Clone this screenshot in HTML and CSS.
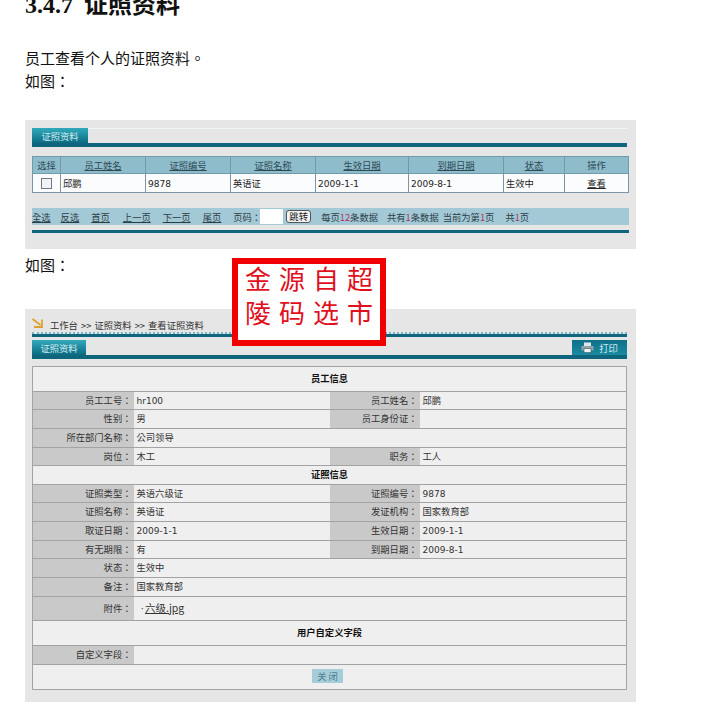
FILE: index.html
```html
<!DOCTYPE html>
<html lang="zh-CN">
<head>
  <meta charset="UTF-8">
  <title>证照资料</title>
  <link rel="stylesheet" href="styles.css">
</head>
<body>
  <h1>3.4.7 证照资料</h1>
  <p class="intro">员工查看个人的证照资料。</p>
  <p class="intro">如图：</p>

  <div class="panel panel-list">
    <div class="tabbar"><span class="tab">证照资料</span></div>
    <table class="list">
      <tr>
        <th class="c-check">选择</th>
        <th class="c-std"><u>员工姓名</u></th>
        <th class="c-std"><u>证照编号</u></th>
        <th class="c-std"><u>证照名称</u></th>
        <th class="c-date"><u>生效日期</u></th>
        <th class="c-date2"><u>到期日期</u></th>
        <th class="c-state"><u>状态</u></th>
        <th>操作</th>
      </tr>
      <tr>
        <td class="center"><span class="check"></span></td>
        <td>邱鹏</td>
        <td class="num">9878</td>
        <td>英语证</td>
        <td class="num">2009-1-1</td>
        <td class="num">2009-8-1</td>
        <td>生效中</td>
        <td class="center"><u>查看</u></td>
      </tr>
    </table>
    <div class="pager">
      <u class="gap-10">全选</u>
      <u class="gap-12">反选</u>
      <u class="gap-13">首页</u>
      <u class="gap-12">上一页</u>
      <u class="gap-12">下一页</u>
      <u class="gap-12">尾页</u>
      <span>页码：</span>
      <span class="page-input"></span>
      <span class="jump">跳转</span>
      <span class="gap-9">每页<b>12</b>条数据</span>
      <span class="gap-4">共有<b>1</b>条数据</span>
      <span class="gap-11">当前为第<b>1</b>页</span>
      <span>共<b>1</b>页</span>
    </div>
    <div class="rule"></div>
  </div>

  <p class="intro intro-second">如图：</p>

  <div class="stamp">
    <div class="stamp-row"><span>金</span><span>源</span><span>自</span><span>超</span></div>
    <div class="stamp-row"><span>陵</span><span>码</span><span>选</span><span>市</span></div>
  </div>

  <div class="panel panel-detail">
    <div class="crumbs">
      <svg class="crumb-icon" width="12" height="10" viewBox="0 0 12 10">
        <path d="M0.5 1 L8.5 7 M2 9 H10 V1.5" fill="none" stroke="#e0a030" stroke-width="1.8"/>
      </svg>
      <span>工作台 &gt;&gt; 证照资料 &gt;&gt; 查看证照资料</span>
    </div>
    <div class="tabbar tabbar-detail">
      <span class="tab">证照资料</span>
      <span class="print">
        <svg width="13" height="11" viewBox="0 0 13 11">
          <path d="M3 0.5 H10 V4 H3 Z" fill="#dfe6e8"/>
          <path d="M0.5 4 H12.5 V8.5 H0.5 Z" fill="#8fa3a8"/>
          <path d="M3 6.5 H10 V10.5 H3 Z" fill="#eef2f3" stroke="#44565c" stroke-width="0.6"/>
        </svg>
        打印
      </span>
    </div>
    <table class="detail">
      <colgroup>
        <col class="col-label">
        <col class="col-value">
        <col class="col-label2">
        <col>
      </colgroup>
      <tr class="h-head"><td colspan="4" class="section">员工信息</td></tr>
      <tr class="h-18"><td class="label">员工工号：</td><td class="num">hr100</td><td class="label">员工姓名：</td><td>邱鹏</td></tr>
      <tr class="h-19"><td class="label">性别：</td><td>男</td><td class="label">员工身份证：</td><td></td></tr>
      <tr class="h-19"><td class="label">所在部门名称：</td><td colspan="3">公司领导</td></tr>
      <tr class="h-18"><td class="label">岗位：</td><td>木工</td><td class="label">职务：</td><td>工人</td></tr>
      <tr class="h-19"><td colspan="4" class="section">证照信息</td></tr>
      <tr class="h-18"><td class="label">证照类型：</td><td>英语六级证</td><td class="label">证照编号：</td><td class="num">9878</td></tr>
      <tr class="h-19"><td class="label">证照名称：</td><td>英语证</td><td class="label">发证机构：</td><td>国家教育部</td></tr>
      <tr class="h-19"><td class="label">取证日期：</td><td class="num">2009-1-1</td><td class="label">生效日期：</td><td class="num">2009-1-1</td></tr>
      <tr class="h-18"><td class="label">有无期限：</td><td>有</td><td class="label">到期日期：</td><td class="num">2009-8-1</td></tr>
      <tr class="h-19"><td class="label">状态：</td><td colspan="3">生效中</td></tr>
      <tr class="h-19"><td class="label">备注：</td><td colspan="3">国家教育部</td></tr>
      <tr class="h-24"><td class="label">附件：</td><td colspan="3" class="attach"><span class="dot">·</span><u>六级.jpg</u></td></tr>
      <tr class="h-head"><td colspan="4" class="section">用户自定义字段</td></tr>
      <tr class="h-19"><td class="label">自定义字段：</td><td colspan="3"></td></tr>
      <tr class="h-head"><td colspan="4" class="center"><span class="close">关 闭</span></td></tr>
    </table>
  </div>
</body>
</html>
```

FILE: styles.css
```css
body {
  margin: 0;
  padding: 0 0 0 25px;
  font-family: "Liberation Serif", "Noto Sans CJK TC", serif;
  font-feature-settings: "locl" 0;
  color: #111;
  background: #fff;
  position: relative;
}

h1 {
  margin: -5px 0 0;
  height: 21px;
  line-height: 21px;
  font-size: 24px;
  font-weight: bold;
  word-spacing: 5px;
  white-space: nowrap;
}

.intro {
  margin: 0;
  height: 23px;
  line-height: 23px;
  font-size: 15px;
  font-family: "Noto Sans CJK TC", sans-serif;
}

h1 + .intro {
  margin-top: 30px;
}

.intro-second {
  margin-top: 4px;
}

.panel {
  width: 611px;
  box-sizing: border-box;
  background: #e6e6e6;
  padding: 8px 9px 0 7px;
  font-family: "Noto Sans CJK TC", sans-serif;
  font-size: 9.3px;
  color: #333;
}

.panel-list {
  margin-top: 28px;
  height: 129px;
}

.panel-detail {
  margin-top: 33px;
  height: 393px;
}

.tabbar {
  display: flex;
  justify-content: space-between;
  height: 15px;
  border-bottom: 4px solid #0f667c;
  box-shadow: 0 1px 0 #f2f8f9 inset;
}

.tab, .print {
  display: flex;
  align-items: center;
  justify-content: center;
  height: 15px;
  color: #cfeaf0;
  background: linear-gradient(#32a9bc, #0b6b82);
}

.tab {
  width: 56px;
}

.tabbar-detail .tab {
  width: 54px;
}

.print {
  width: 55px;
  gap: 5px;
  background: linear-gradient(#0f6f88, #1a8aa0);
}

.list {
  width: 597px;
  margin-top: 9px;
  border-collapse: collapse;
  table-layout: fixed;
  background: #fbfcfd;
}

.list th, .list td {
  box-sizing: border-box;
  border: 1px solid #7d93a8;
  padding: 0 2px 1px;
  overflow: hidden;
  white-space: nowrap;
}

.list th {
  height: 17px;
  background: #8fbccb;
  color: #2d4a55;
  font-weight: normal;
  border-color: #6f9bad;
}

.list td {
  height: 19px;
  color: #222;
}

.c-check { width: 28px; }
.c-std { width: 85px; }
.c-date { width: 93px; }
.c-date2 { width: 95px; }
.c-state { width: 61px; }

.center {
  text-align: center;
}

.num {
  font-family: "DejaVu Sans", sans-serif;
  font-size: 9px;
}

.list td.num {
  padding: 2px 2px 0;
}

.check {
  display: inline-block;
  width: 9px;
  height: 9px;
  border: 1px solid #6c7a85;
  background: #f1f3f4;
  vertical-align: middle;
}

.pager {
  display: flex;
  align-items: center;
  width: 597px;
  height: 17px;
  margin-top: 15px;
  background: #a4c9d6;
  color: #2c3f47;
  white-space: nowrap;
}

.pager b {
  color: #b03060;
  font-weight: normal;
}

.gap-4 { margin-right: 4px; }
.gap-9 { margin-right: 9px; }
.gap-10 { margin-right: 10px; }
.gap-12 { margin-right: 12px; }
.gap-11 { margin-right: 11px; }
.gap-13 { margin-right: 13px; }

.page-input {
  width: 23px;
  height: 15px;
  margin: 0 3px 0 -1px;
  background: #fff;
}

.jump {
  width: 23px;
  height: 11px;
  margin-right: 10px;
  line-height: 11px;
  text-align: center;
  background: #f2f2f2;
  border: 1px solid #555;
  border-radius: 3px;
  color: #222;
}

.rule {
  width: 597px;
  height: 3px;
  margin-top: 5px;
  background: #0f667c;
}

.stamp {
  position: absolute;
  left: 232px;
  top: 258px;
  width: 154px;
  height: 88px;
  box-sizing: border-box;
  border: 6px solid #f00000;
  background: #fff;
  padding: 0 7px;
  display: flex;
  flex-direction: column;
  gap: 6px;
  color: #e0101c;
  font-family: "Noto Sans CJK TC", sans-serif;
  font-size: 26px;
  line-height: 28px;
}

.stamp-row {
  display: flex;
  justify-content: space-between;
}

.crumbs {
  display: flex;
  align-items: flex-end;
  height: 13px;
  padding-top: 2px;
  width: 595px;
  border-bottom: 2px dotted #7fb6c6;
}

.crumb-icon {
  margin: 0 6px 4px 0;
}

.crumbs span {
  line-height: 13px;
  word-spacing: 1px;
}

.tabbar-detail {
  width: 595px;
  padding-top: 3px;
  border-top: 3px solid #0f667c;
  box-shadow: none;
}

.detail {
  width: 595px;
  margin-top: 7px;
  border-collapse: collapse;
  table-layout: fixed;
  background: #efefef;
  border: 1px solid #a3a3a3;
}

.col-label { width: 101px; }
.col-value { width: 196px; }
.col-label2 { width: 90px; }

.detail td {
  box-sizing: border-box;
  border-top: 1px solid #a3a3a3;
  border-bottom: 1px solid #a3a3a3;
  padding: 0 3px 2px;
  color: #333;
  white-space: nowrap;
}

.detail .label {
  padding: 0 2px 2px 0;
  background: #c9c9c9;
  text-align: right;
}

.detail .num {
  padding-bottom: 0;
}

.detail .section {
  text-align: center;
  font-weight: bold;
  color: #111;
}

.attach {
  font-size: 10.5px;
}

.dot {
  font-family: "Liberation Sans", sans-serif;
  margin: 0 1px 0 4px;
}

.h-head td { height: 25px; }
.h-18 td { height: 18px; }
.h-19 td { height: 19px; }
.h-24 td { height: 24px; }

.close {
  display: inline-block;
  width: 31px;
  height: 14px;
  margin-right: 4px;
  line-height: 14px;
  background: #a4cdd8;
  color: #4f7d8c;
}
```
